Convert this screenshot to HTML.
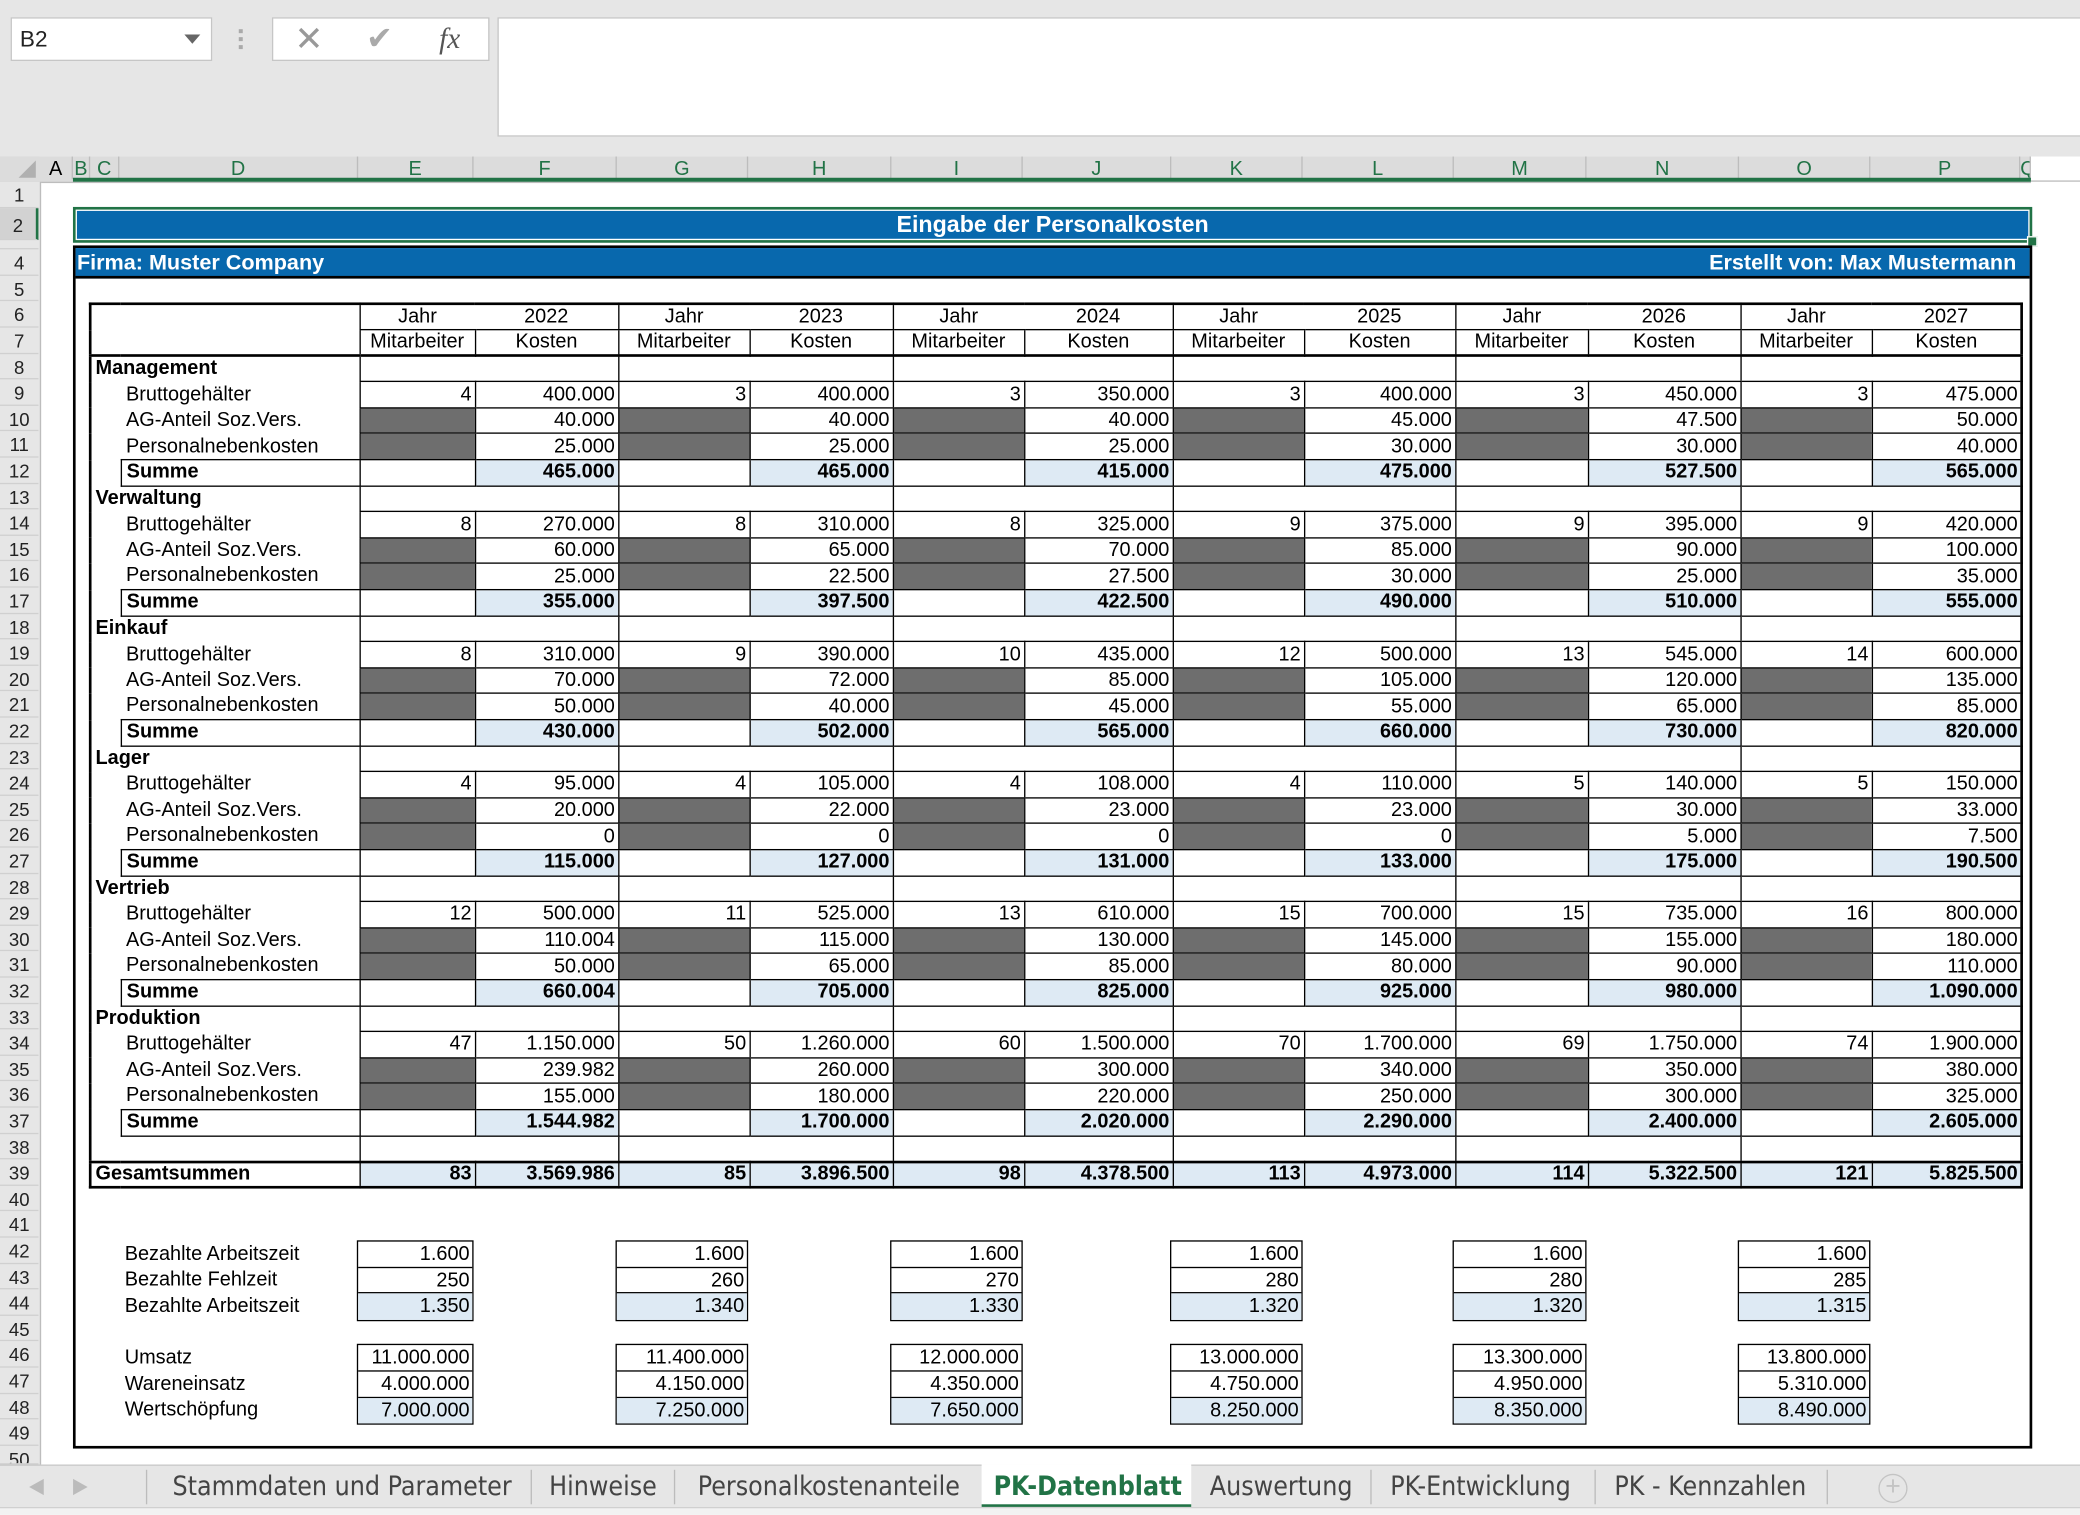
<!DOCTYPE html>
<html><head><meta charset="utf-8">
<style>
html,body{margin:0;padding:0;width:2080px;height:1513px;overflow:hidden;background:#fff}
#w{position:absolute;left:0;top:0;width:1568px;height:1141px;transform:scale(1.326531);transform-origin:0 0;font-family:"Liberation Sans",Arial,sans-serif;color:#000}
.a{position:absolute}
#top{left:0;top:0;width:1568px;height:118px;background:#e6e6e6}
.box{background:#fff;border:1px solid #c6c6c6;box-sizing:border-box}
#colh{left:0;top:118px;width:1531px;height:19px;background:#dcdcdc;border-bottom:1px solid #bdbdbd}
.ch{position:absolute;top:0;height:17px;font-size:15px;line-height:20px;text-align:center;color:#217346;border-right:1px solid #bdbdbd;box-sizing:border-box}
#rowh{left:0;top:137px;width:30px;height:967px;background:#e6e6e6;border-right:1px solid #bdbdbd}
.rh{position:absolute;left:0;width:29px;text-align:center;font-size:14px;color:#222;border-bottom:1px solid #d0d0d0;box-sizing:border-box}
table{position:absolute;left:67px;top:228px;border-collapse:collapse;table-layout:fixed;width:1456px;border:2px solid #000}
tr{height:19.6px}
td{padding:0 2px;font-size:15px;line-height:16px;white-space:nowrap;overflow:hidden;box-sizing:border-box}
td.m,td.k,td.g{border-left:1px solid #000;border-bottom:1px solid #000;text-align:right}
td.c{text-align:center}
td.h{background:#6e6e6e}
td.f{background:#deeaf4}
.b{font-weight:bold}
td.cat{font-weight:bold;padding-left:3px;text-align:left}
td.d{padding-left:4px}
td.sb{border:1px solid #000;font-weight:bold}
.lb{position:absolute;border:1px solid #000;box-sizing:border-box;width:88px}
.lb div{height:19.6px;border-bottom:1px solid #000;box-sizing:border-box;text-align:right;padding-right:2px;font-size:15px;line-height:19px}
.lb div:last-child{border-bottom:none;background:#deeaf4}
.ll{position:absolute;left:94px;font-size:15px;line-height:19.6px}
#tabs{left:0;top:1104px;width:1568px;height:32px;background:#e6e6e6;border-top:1px solid #c8c8c8}
.t{position:absolute;top:0;height:31px;line-height:30px;font-size:20px;color:#444;font-family:"DejaVu Sans Condensed","Liberation Sans",sans-serif}
.sep{position:absolute;top:3px;width:1px;height:26px;background:#bcbcbc}
</style></head><body><div id="w">
<div class="a" id="top"></div>
<div class="a box" style="left:8px;top:13px;width:152px;height:33px;font-size:17px;line-height:32px;padding-left:6px;color:#222">B2</div>
<div class="a" style="left:139px;top:26px;width:0;height:0;border-left:6px solid transparent;border-right:6px solid transparent;border-top:7px solid #666"></div>
<div class="a" style="left:180px;top:22px;width:3px;height:3px;background:#aaa;box-shadow:0 6px #aaa,0 12px #aaa"></div>
<div class="a box" style="left:205px;top:13px;width:164px;height:33px"></div>
<div class="a" style="left:222px;top:13px;font-size:26px;line-height:33px;color:#999">✕</div>
<div class="a" style="left:276px;top:13px;font-size:24px;line-height:33px;color:#aaa">✔</div>
<div class="a" style="left:331px;top:13px;font-size:22px;line-height:31px;color:#555;font-family:'Liberation Serif',serif;font-style:italic">fx</div>
<div class="a box" style="left:375px;top:13px;width:1200px;height:90px"></div>

<div class="a" id="colh">
<div class="a" style="left:0;top:0;width:30px;height:18px;background:#dcdcdc"></div>
<div class="a" style="left:14px;top:3px;width:0;height:0;border-left:13px solid transparent;border-bottom:13px solid #b0b0b0"></div>
<div class="ch" style="left:30px;width:25px;color:#000">A</div>
<div class="ch" style="left:55px;width:13px">B</div>
<div class="ch" style="left:68px;width:22px">C</div>
<div class="ch" style="left:90px;width:180px">D</div>
<div class="ch" style="left:270px;width:87px">E</div>
<div class="ch" style="left:357px;width:108px">F</div>
<div class="ch" style="left:465px;width:99px">G</div>
<div class="ch" style="left:564px;width:108px">H</div>
<div class="ch" style="left:672px;width:99px">I</div>
<div class="ch" style="left:771px;width:112px">J</div>
<div class="ch" style="left:883px;width:99px">K</div>
<div class="ch" style="left:982px;width:114px">L</div>
<div class="ch" style="left:1096px;width:100px">M</div>
<div class="ch" style="left:1196px;width:115px">N</div>
<div class="ch" style="left:1311px;width:99px">O</div>
<div class="ch" style="left:1410px;width:113px">P</div>
<div class="ch" style="left:1523px;width:8px;overflow:hidden">Q</div>
<div class="a" style="left:55px;top:16px;width:1476px;height:3px;background:#217346"></div>
</div>
<div class="a" style="left:1531px;top:136px;width:37px;height:1px;background:#bdbdbd"></div>

<div class="a" id="rowh">
<div class="rh" style="top:0;height:20px;line-height:20px">1</div>
<div class="rh" style="top:20px;height:24px;line-height:26px;background:#d2d2d2;border-right:2px solid #217346">2</div>
<div class="rh" style="top:44px;height:7px"></div>
<div class="rh" style="top:51.2px;height:19.6px;line-height:20px">4</div>
<div class="rh" style="top:70.8px;height:19.6px;line-height:20px">5</div>
<div class="rh" style="top:90.4px;height:19.6px;line-height:20px">6</div>
<div class="rh" style="top:110px;height:19.6px;line-height:20px">7</div>
<div class="rh" style="top:129.6px;height:19.6px;line-height:20px">8</div>
<div class="rh" style="top:149.2px;height:19.6px;line-height:20px">9</div>
<div class="rh" style="top:168.8px;height:19.6px;line-height:20px">10</div>
<div class="rh" style="top:188.4px;height:19.6px;line-height:20px">11</div>
<div class="rh" style="top:208px;height:19.6px;line-height:20px">12</div>
<div class="rh" style="top:227.6px;height:19.6px;line-height:20px">13</div>
<div class="rh" style="top:247.2px;height:19.6px;line-height:20px">14</div>
<div class="rh" style="top:266.8px;height:19.6px;line-height:20px">15</div>
<div class="rh" style="top:286.4px;height:19.6px;line-height:20px">16</div>
<div class="rh" style="top:306px;height:19.6px;line-height:20px">17</div>
<div class="rh" style="top:325.6px;height:19.6px;line-height:20px">18</div>
<div class="rh" style="top:345.2px;height:19.6px;line-height:20px">19</div>
<div class="rh" style="top:364.8px;height:19.6px;line-height:20px">20</div>
<div class="rh" style="top:384.4px;height:19.6px;line-height:20px">21</div>
<div class="rh" style="top:404px;height:19.6px;line-height:20px">22</div>
<div class="rh" style="top:423.6px;height:19.6px;line-height:20px">23</div>
<div class="rh" style="top:443.2px;height:19.6px;line-height:20px">24</div>
<div class="rh" style="top:462.8px;height:19.6px;line-height:20px">25</div>
<div class="rh" style="top:482.4px;height:19.6px;line-height:20px">26</div>
<div class="rh" style="top:502px;height:19.6px;line-height:20px">27</div>
<div class="rh" style="top:521.6px;height:19.6px;line-height:20px">28</div>
<div class="rh" style="top:541.2px;height:19.6px;line-height:20px">29</div>
<div class="rh" style="top:560.8px;height:19.6px;line-height:20px">30</div>
<div class="rh" style="top:580.4px;height:19.6px;line-height:20px">31</div>
<div class="rh" style="top:600px;height:19.6px;line-height:20px">32</div>
<div class="rh" style="top:619.6px;height:19.6px;line-height:20px">33</div>
<div class="rh" style="top:639.2px;height:19.6px;line-height:20px">34</div>
<div class="rh" style="top:658.8px;height:19.6px;line-height:20px">35</div>
<div class="rh" style="top:678.4px;height:19.6px;line-height:20px">36</div>
<div class="rh" style="top:698px;height:19.6px;line-height:20px">37</div>
<div class="rh" style="top:717.6px;height:19.6px;line-height:20px">38</div>
<div class="rh" style="top:737.2px;height:19.6px;line-height:20px">39</div>
<div class="rh" style="top:756.8px;height:19.6px;line-height:20px">40</div>
<div class="rh" style="top:776.4px;height:19.6px;line-height:20px">41</div>
<div class="rh" style="top:796px;height:19.6px;line-height:20px">42</div>
<div class="rh" style="top:815.6px;height:19.6px;line-height:20px">43</div>
<div class="rh" style="top:835.2px;height:19.6px;line-height:20px">44</div>
<div class="rh" style="top:854.8px;height:19.6px;line-height:20px">45</div>
<div class="rh" style="top:874.4px;height:19.6px;line-height:20px">46</div>
<div class="rh" style="top:894px;height:19.6px;line-height:20px">47</div>
<div class="rh" style="top:913.6px;height:19.6px;line-height:20px">48</div>
<div class="rh" style="top:933.2px;height:19.6px;line-height:20px">49</div>
<div class="rh" style="top:952.8px;height:14px;line-height:20px;overflow:hidden">50</div>
</div>

<div class="a" style="left:55px;top:156px;width:1477px;height:27px;border:2px solid #217346;box-sizing:border-box;background:#fff"></div>
<div class="a" style="left:58px;top:159px;width:1471px;height:21px;background:#0868ad;color:#fff;font-weight:bold;font-size:17.5px;line-height:21px;text-align:center">Eingabe der Personalkosten</div>
<div class="a" style="left:1528px;top:178px;width:6px;height:6px;background:#217346;border:1px solid #fff"></div>
<div class="a" style="left:55px;top:185px;width:1477px;height:907px;border:2px solid #000;box-sizing:border-box"></div>
<div class="a" style="left:57px;top:187px;width:1473px;height:21px;background:#0868ad;border-bottom:2px solid #000;color:#fff;font-weight:bold;font-size:16.3px;line-height:22px"><span style="position:absolute;left:1px">Firma: Muster Company</span><span style="position:absolute;right:10px">Erstellt von: Max Mustermann</span></div>

<table>
<colgroup><col style="width:23px"><col style="width:180px"><col style="width:87px"><col style="width:108px"><col style="width:99px"><col style="width:108px"><col style="width:99px"><col style="width:112px"><col style="width:99px"><col style="width:114px"><col style="width:100px"><col style="width:115px"><col style="width:99px"><col style="width:113px"></colgroup>
<tr><td colspan="2" rowspan="2" style="border-bottom:2px solid #000"></td>
<td class="m c">Jahr</td><td class="k c" style="border-left:none">2022</td>
<td class="m c">Jahr</td><td class="k c" style="border-left:none">2023</td>
<td class="m c">Jahr</td><td class="k c" style="border-left:none">2024</td>
<td class="m c">Jahr</td><td class="k c" style="border-left:none">2025</td>
<td class="m c">Jahr</td><td class="k c" style="border-left:none">2026</td>
<td class="m c">Jahr</td><td class="k c" style="border-left:none">2027</td></tr>
<tr style="border-bottom:2px solid #000"><td class="m c">Mitarbeiter</td><td class="k c">Kosten</td><td class="m c">Mitarbeiter</td><td class="k c">Kosten</td><td class="m c">Mitarbeiter</td><td class="k c">Kosten</td><td class="m c">Mitarbeiter</td><td class="k c">Kosten</td><td class="m c">Mitarbeiter</td><td class="k c">Kosten</td><td class="m c">Mitarbeiter</td><td class="k c">Kosten</td></tr>

<tr><td colspan="2" class="cat">Management</td><td colspan="2" class="g"></td><td colspan="2" class="g"></td><td colspan="2" class="g"></td><td colspan="2" class="g"></td><td colspan="2" class="g"></td><td colspan="2" class="g"></td></tr>
<tr><td></td><td class="d">Bruttogehälter</td><td class="m">4</td><td class="k">400.000</td><td class="m">3</td><td class="k">400.000</td><td class="m">3</td><td class="k">350.000</td><td class="m">3</td><td class="k">400.000</td><td class="m">3</td><td class="k">450.000</td><td class="m">3</td><td class="k">475.000</td></tr>
<tr><td></td><td class="d">AG-Anteil Soz.Vers.</td><td class="m h"></td><td class="k">40.000</td><td class="m h"></td><td class="k">40.000</td><td class="m h"></td><td class="k">40.000</td><td class="m h"></td><td class="k">45.000</td><td class="m h"></td><td class="k">47.500</td><td class="m h"></td><td class="k">50.000</td></tr>
<tr><td></td><td class="d">Personalnebenkosten</td><td class="m h"></td><td class="k">25.000</td><td class="m h"></td><td class="k">25.000</td><td class="m h"></td><td class="k">25.000</td><td class="m h"></td><td class="k">30.000</td><td class="m h"></td><td class="k">30.000</td><td class="m h"></td><td class="k">40.000</td></tr>
<tr><td></td><td class="d sb">Summe</td><td class="m"></td><td class="k b f">465.000</td><td class="m"></td><td class="k b f">465.000</td><td class="m"></td><td class="k b f">415.000</td><td class="m"></td><td class="k b f">475.000</td><td class="m"></td><td class="k b f">527.500</td><td class="m"></td><td class="k b f">565.000</td></tr>

<tr><td colspan="2" class="cat">Verwaltung</td><td colspan="2" class="g"></td><td colspan="2" class="g"></td><td colspan="2" class="g"></td><td colspan="2" class="g"></td><td colspan="2" class="g"></td><td colspan="2" class="g"></td></tr>
<tr><td></td><td class="d">Bruttogehälter</td><td class="m">8</td><td class="k">270.000</td><td class="m">8</td><td class="k">310.000</td><td class="m">8</td><td class="k">325.000</td><td class="m">9</td><td class="k">375.000</td><td class="m">9</td><td class="k">395.000</td><td class="m">9</td><td class="k">420.000</td></tr>
<tr><td></td><td class="d">AG-Anteil Soz.Vers.</td><td class="m h"></td><td class="k">60.000</td><td class="m h"></td><td class="k">65.000</td><td class="m h"></td><td class="k">70.000</td><td class="m h"></td><td class="k">85.000</td><td class="m h"></td><td class="k">90.000</td><td class="m h"></td><td class="k">100.000</td></tr>
<tr><td></td><td class="d">Personalnebenkosten</td><td class="m h"></td><td class="k">25.000</td><td class="m h"></td><td class="k">22.500</td><td class="m h"></td><td class="k">27.500</td><td class="m h"></td><td class="k">30.000</td><td class="m h"></td><td class="k">25.000</td><td class="m h"></td><td class="k">35.000</td></tr>
<tr><td></td><td class="d sb">Summe</td><td class="m"></td><td class="k b f">355.000</td><td class="m"></td><td class="k b f">397.500</td><td class="m"></td><td class="k b f">422.500</td><td class="m"></td><td class="k b f">490.000</td><td class="m"></td><td class="k b f">510.000</td><td class="m"></td><td class="k b f">555.000</td></tr>

<tr><td colspan="2" class="cat">Einkauf</td><td colspan="2" class="g"></td><td colspan="2" class="g"></td><td colspan="2" class="g"></td><td colspan="2" class="g"></td><td colspan="2" class="g"></td><td colspan="2" class="g"></td></tr>
<tr><td></td><td class="d">Bruttogehälter</td><td class="m">8</td><td class="k">310.000</td><td class="m">9</td><td class="k">390.000</td><td class="m">10</td><td class="k">435.000</td><td class="m">12</td><td class="k">500.000</td><td class="m">13</td><td class="k">545.000</td><td class="m">14</td><td class="k">600.000</td></tr>
<tr><td></td><td class="d">AG-Anteil Soz.Vers.</td><td class="m h"></td><td class="k">70.000</td><td class="m h"></td><td class="k">72.000</td><td class="m h"></td><td class="k">85.000</td><td class="m h"></td><td class="k">105.000</td><td class="m h"></td><td class="k">120.000</td><td class="m h"></td><td class="k">135.000</td></tr>
<tr><td></td><td class="d">Personalnebenkosten</td><td class="m h"></td><td class="k">50.000</td><td class="m h"></td><td class="k">40.000</td><td class="m h"></td><td class="k">45.000</td><td class="m h"></td><td class="k">55.000</td><td class="m h"></td><td class="k">65.000</td><td class="m h"></td><td class="k">85.000</td></tr>
<tr><td></td><td class="d sb">Summe</td><td class="m"></td><td class="k b f">430.000</td><td class="m"></td><td class="k b f">502.000</td><td class="m"></td><td class="k b f">565.000</td><td class="m"></td><td class="k b f">660.000</td><td class="m"></td><td class="k b f">730.000</td><td class="m"></td><td class="k b f">820.000</td></tr>

<tr><td colspan="2" class="cat">Lager</td><td colspan="2" class="g"></td><td colspan="2" class="g"></td><td colspan="2" class="g"></td><td colspan="2" class="g"></td><td colspan="2" class="g"></td><td colspan="2" class="g"></td></tr>
<tr><td></td><td class="d">Bruttogehälter</td><td class="m">4</td><td class="k">95.000</td><td class="m">4</td><td class="k">105.000</td><td class="m">4</td><td class="k">108.000</td><td class="m">4</td><td class="k">110.000</td><td class="m">5</td><td class="k">140.000</td><td class="m">5</td><td class="k">150.000</td></tr>
<tr><td></td><td class="d">AG-Anteil Soz.Vers.</td><td class="m h"></td><td class="k">20.000</td><td class="m h"></td><td class="k">22.000</td><td class="m h"></td><td class="k">23.000</td><td class="m h"></td><td class="k">23.000</td><td class="m h"></td><td class="k">30.000</td><td class="m h"></td><td class="k">33.000</td></tr>
<tr><td></td><td class="d">Personalnebenkosten</td><td class="m h"></td><td class="k">0</td><td class="m h"></td><td class="k">0</td><td class="m h"></td><td class="k">0</td><td class="m h"></td><td class="k">0</td><td class="m h"></td><td class="k">5.000</td><td class="m h"></td><td class="k">7.500</td></tr>
<tr><td></td><td class="d sb">Summe</td><td class="m"></td><td class="k b f">115.000</td><td class="m"></td><td class="k b f">127.000</td><td class="m"></td><td class="k b f">131.000</td><td class="m"></td><td class="k b f">133.000</td><td class="m"></td><td class="k b f">175.000</td><td class="m"></td><td class="k b f">190.500</td></tr>

<tr><td colspan="2" class="cat">Vertrieb</td><td colspan="2" class="g"></td><td colspan="2" class="g"></td><td colspan="2" class="g"></td><td colspan="2" class="g"></td><td colspan="2" class="g"></td><td colspan="2" class="g"></td></tr>
<tr><td></td><td class="d">Bruttogehälter</td><td class="m">12</td><td class="k">500.000</td><td class="m">11</td><td class="k">525.000</td><td class="m">13</td><td class="k">610.000</td><td class="m">15</td><td class="k">700.000</td><td class="m">15</td><td class="k">735.000</td><td class="m">16</td><td class="k">800.000</td></tr>
<tr><td></td><td class="d">AG-Anteil Soz.Vers.</td><td class="m h"></td><td class="k">110.004</td><td class="m h"></td><td class="k">115.000</td><td class="m h"></td><td class="k">130.000</td><td class="m h"></td><td class="k">145.000</td><td class="m h"></td><td class="k">155.000</td><td class="m h"></td><td class="k">180.000</td></tr>
<tr><td></td><td class="d">Personalnebenkosten</td><td class="m h"></td><td class="k">50.000</td><td class="m h"></td><td class="k">65.000</td><td class="m h"></td><td class="k">85.000</td><td class="m h"></td><td class="k">80.000</td><td class="m h"></td><td class="k">90.000</td><td class="m h"></td><td class="k">110.000</td></tr>
<tr><td></td><td class="d sb">Summe</td><td class="m"></td><td class="k b f">660.004</td><td class="m"></td><td class="k b f">705.000</td><td class="m"></td><td class="k b f">825.000</td><td class="m"></td><td class="k b f">925.000</td><td class="m"></td><td class="k b f">980.000</td><td class="m"></td><td class="k b f">1.090.000</td></tr>

<tr><td colspan="2" class="cat">Produktion</td><td colspan="2" class="g"></td><td colspan="2" class="g"></td><td colspan="2" class="g"></td><td colspan="2" class="g"></td><td colspan="2" class="g"></td><td colspan="2" class="g"></td></tr>
<tr><td></td><td class="d">Bruttogehälter</td><td class="m">47</td><td class="k">1.150.000</td><td class="m">50</td><td class="k">1.260.000</td><td class="m">60</td><td class="k">1.500.000</td><td class="m">70</td><td class="k">1.700.000</td><td class="m">69</td><td class="k">1.750.000</td><td class="m">74</td><td class="k">1.900.000</td></tr>
<tr><td></td><td class="d">AG-Anteil Soz.Vers.</td><td class="m h"></td><td class="k">239.982</td><td class="m h"></td><td class="k">260.000</td><td class="m h"></td><td class="k">300.000</td><td class="m h"></td><td class="k">340.000</td><td class="m h"></td><td class="k">350.000</td><td class="m h"></td><td class="k">380.000</td></tr>
<tr><td></td><td class="d">Personalnebenkosten</td><td class="m h"></td><td class="k">155.000</td><td class="m h"></td><td class="k">180.000</td><td class="m h"></td><td class="k">220.000</td><td class="m h"></td><td class="k">250.000</td><td class="m h"></td><td class="k">300.000</td><td class="m h"></td><td class="k">325.000</td></tr>
<tr><td></td><td class="d sb">Summe</td><td class="m"></td><td class="k b f">1.544.982</td><td class="m"></td><td class="k b f">1.700.000</td><td class="m"></td><td class="k b f">2.020.000</td><td class="m"></td><td class="k b f">2.290.000</td><td class="m"></td><td class="k b f">2.400.000</td><td class="m"></td><td class="k b f">2.605.000</td></tr>

<tr style="border-bottom:2px solid #000"><td colspan="2"></td><td colspan="2" class="g"></td><td colspan="2" class="g"></td><td colspan="2" class="g"></td><td colspan="2" class="g"></td><td colspan="2" class="g"></td><td colspan="2" class="g"></td></tr>
<tr><td colspan="2" class="cat">Gesamtsummen</td><td class="m b f">83</td><td class="k b f">3.569.986</td><td class="m b f">85</td><td class="k b f">3.896.500</td><td class="m b f">98</td><td class="k b f">4.378.500</td><td class="m b f">113</td><td class="k b f">4.973.000</td><td class="m b f">114</td><td class="k b f">5.322.500</td><td class="m b f">121</td><td class="k b f">5.825.500</td></tr>
</table>

<div class="ll" style="top:935.8px">Bezahlte Arbeitszeit<br>Bezahlte Fehlzeit<br>Bezahlte Arbeitszeit</div>
<div class="ll" style="top:1014.2px">Umsatz<br>Wareneinsatz<br>Wertschöpfung</div>

<div class="lb" style="left:269px;top:935px"><div>1.600</div><div>250</div><div>1.350</div></div>
<div class="lb" style="left:464px;top:935px;width:100px"><div>1.600</div><div>260</div><div>1.340</div></div>
<div class="lb" style="left:671px;top:935px;width:100px"><div>1.600</div><div>270</div><div>1.330</div></div>
<div class="lb" style="left:882px;top:935px;width:100px"><div>1.600</div><div>280</div><div>1.320</div></div>
<div class="lb" style="left:1095px;top:935px;width:101px"><div>1.600</div><div>280</div><div>1.320</div></div>
<div class="lb" style="left:1310px;top:935px;width:100px"><div>1.600</div><div>285</div><div>1.315</div></div>

<div class="lb" style="left:269px;top:1013.4px"><div>11.000.000</div><div>4.000.000</div><div>7.000.000</div></div>
<div class="lb" style="left:464px;top:1013.4px;width:100px"><div>11.400.000</div><div>4.150.000</div><div>7.250.000</div></div>
<div class="lb" style="left:671px;top:1013.4px;width:100px"><div>12.000.000</div><div>4.350.000</div><div>7.650.000</div></div>
<div class="lb" style="left:882px;top:1013.4px;width:100px"><div>13.000.000</div><div>4.750.000</div><div>8.250.000</div></div>
<div class="lb" style="left:1095px;top:1013.4px;width:101px"><div>13.300.000</div><div>4.950.000</div><div>8.350.000</div></div>
<div class="lb" style="left:1310px;top:1013.4px;width:100px"><div>13.800.000</div><div>5.310.000</div><div>8.490.000</div></div>

<div class="a" id="tabs">
<div class="t" style="left:22px;color:#bbb;font-size:16px">&#9664;</div>
<div class="t" style="left:55px;color:#bbb;font-size:16px">&#9654;</div>
<div class="sep" style="left:110px"></div>
<div class="t" style="left:130px">Stammdaten und Parameter</div>
<div class="sep" style="left:400px"></div>
<div class="t" style="left:414px">Hinweise</div>
<div class="sep" style="left:508px"></div>
<div class="t" style="left:526px">Personalkostenanteile</div>
<div class="a" style="left:740px;top:-1px;width:158px;height:30px;background:#fff;border-bottom:3px solid #217346"></div>
<div class="t" style="left:749px;color:#217346;font-weight:bold">PK-Datenblatt</div>
<div class="t" style="left:912px">Auswertung</div>
<div class="sep" style="left:1033px"></div>
<div class="t" style="left:1048px">PK-Entwicklung</div>
<div class="sep" style="left:1202px"></div>
<div class="t" style="left:1217px">PK - Kennzahlen</div>
<div class="sep" style="left:1377px"></div>
<div class="a" style="left:1416px;top:6px;width:20px;height:20px;border:1.5px solid #c4c4c4;border-radius:50%;color:#c4c4c4;font-size:20px;line-height:19px;text-align:center">+</div>
</div>
<div class="a" style="left:0;top:1136px;width:1568px;height:5px;background:#f2f2f2;border-top:1px solid #d0d0d0"></div>
</div></body></html>
